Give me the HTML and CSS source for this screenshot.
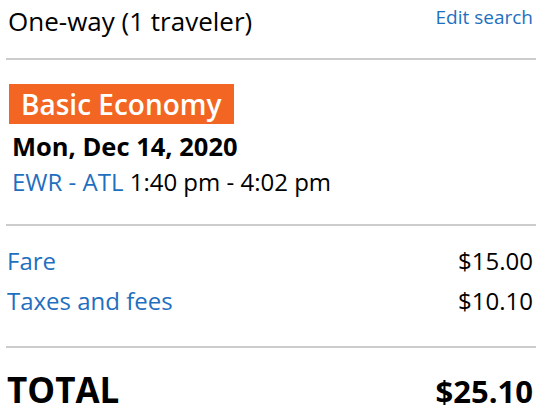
FILE: index.html
```html
<!DOCTYPE html>
<html>
<head>
<meta charset="utf-8">
<link rel="stylesheet" href="styles.css">
</head>
<body>
<div class="summary">
  <div class="header">
    <div class="trip">One-way (1 traveler)</div>
    <a class="edit" href="#">Edit search</a>
  </div>
  <div class="flight">
    <div class="badge">Basic Economy</div>
    <div class="date">Mon, Dec 14, 2020</div>
    <div class="route"><span class="link">EWR - ATL</span> 1:40 pm - 4:02 pm</div>
  </div>
  <div class="costs">
    <div class="row"><span class="link">Fare</span><span>$15.00</span></div>
    <div class="row"><span class="link">Taxes and fees</span><span>$10.10</span></div>
  </div>
  <div class="total">
    <span class="total-label">TOTAL</span><span class="total-amount">$25.10</span>
  </div>
</div>
</body>
</html>
```
FILE: styles.css
```css
html, body { margin: 0; padding: 0; background: #fff; }
body {
  font-family: "Open Sans", "Liberation Sans", sans-serif;
  color: #000;
}
.summary {
  width: 530px;
  margin-left: 6px;
}
.header {
  display: flex;
  justify-content: space-between;
  align-items: flex-start;
  padding: 0 3px 0 2px;
  height: 60px;
  box-sizing: border-box;
  border-bottom: 2px solid #cccccc;
}
.trip { font-size: 26px; line-height: 42px; }
.edit {
  color: #1f6fbf;
  text-decoration: none;
  font-size: 19px;
  line-height: 34px;
}
.flight {
  padding: 24px 0 0 0;
  height: 166px;
  border-bottom: 2px solid #cccccc;
  box-sizing: border-box;
}
.badge {
  display: inline-block;
  background: #f26522;
  color: #fff;
  font-weight: 600;
  font-size: 28px;
  line-height: 40px;
  padding: 0 12px;
  margin-left: 3px;
}
.date {
  font-weight: 700;
  font-size: 25.5px;
  line-height: 36px;
  margin-left: 6px;
  margin-top: 4px;
}
.route {
  font-size: 24px;
  line-height: 36px;
  margin-left: 6px;
}
.link { color: #1f6fbf; }
.costs {
  padding: 15px 3px 0 1px;
  height: 122px;
  box-sizing: border-box;
  border-bottom: 2px solid #cccccc;
}
.row {
  display: flex;
  justify-content: space-between;
  font-size: 24px;
  line-height: 40px;
}
.total {
  display: flex;
  justify-content: space-between;
  align-items: baseline;
  font-weight: 700;
  padding: 17px 3px 0 1px;
}
.total-label { font-size: 35px; line-height: 50px; }
.total-amount { font-size: 31px; line-height: 50px; }
```
